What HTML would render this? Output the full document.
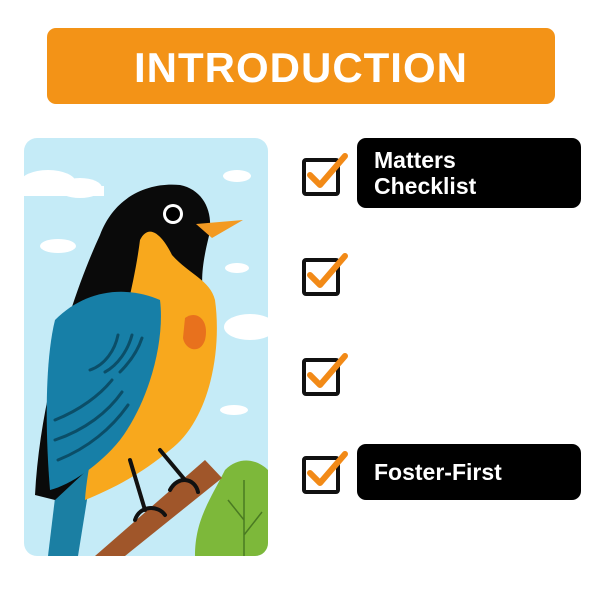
<!DOCTYPE html>
<html><head><meta charset="utf-8"><style>
body{margin:0;width:600px;height:600px;background:#fff;position:relative;overflow:hidden;font-family:"Liberation Sans",sans-serif}
.hdr{position:absolute;left:47px;top:28px;width:508px;height:76px;background:#F39317;border-radius:9px;color:#fff;font-weight:bold;font-size:42px;text-align:center;line-height:80px;letter-spacing:1px}
.cb{position:absolute;left:302px;width:30px;height:30px;border:4px solid #111;border-radius:4px;background:#fff}
.lab{position:absolute;left:357px;width:224px;background:#000;border-radius:9px;color:#fff;font-weight:bold;font-size:23px;line-height:26px;box-sizing:border-box;padding-left:17px}
svg.ck{position:absolute;left:300px;overflow:visible}
</style></head><body>
<div class="hdr">INTRODUCTION</div>
<svg style="position:absolute;left:24px;top:138px" width="244" height="418" viewBox="24 138 244 418">
<defs><clipPath id="c"><rect x="24" y="138" width="244" height="418" rx="13"/></clipPath></defs>
<g clip-path="url(#c)">
<rect x="24" y="138" width="244" height="418" fill="#C5EBF7"/>
<g fill="#fff">
<ellipse cx="48" cy="183" rx="28" ry="13"/><ellipse cx="80" cy="188" rx="22" ry="10"/><rect x="24" y="186" width="80" height="10"/>
<ellipse cx="237" cy="176" rx="14" ry="6"/><ellipse cx="58" cy="246" rx="18" ry="7"/><ellipse cx="237" cy="268" rx="12" ry="5"/>
<ellipse cx="250" cy="327" rx="26" ry="13"/><ellipse cx="234" cy="410" rx="14" ry="5"/>
</g>
<path d="M225 470 C240 455 258 460 268 470 L268 556 L195 556 C195 520 210 500 225 470Z" fill="#7DB83A"/>
<path d="M244 480 L244 556 M244 520 L228 500 M244 535 L262 512" stroke="#4a7a22" stroke-width="1.5" fill="none"/>
<path d="M95 556 L205 460 L222 478 L125 556Z" fill="#A0562A"/>
<path d="M62 440 L48 556 L78 556 L95 450Z" fill="#1B7FA3"/>
<path d="M35 495 C40 400 70 300 100 235 C115 195 150 182 180 185 C205 190 215 215 208 240 C202 265 200 285 205 300 L130 430 L55 500 Z" fill="#0A0A0A"/>
<path d="M140 240 C150 220 165 240 172 255 C190 275 210 280 215 300 C222 350 210 420 170 450 C140 475 110 490 85 500 C90 430 130 320 140 240Z" fill="#F8A81D"/>
<path d="M55 320 C85 290 125 285 160 300 C165 340 150 400 120 440 C100 465 70 485 50 490 C45 430 45 360 55 320Z" fill="#177FA7"/>
<g stroke="#0b4e68" stroke-width="3" fill="none" stroke-linecap="round">
<path d="M90 370 C105 365 115 350 118 335"/><path d="M105 372 C118 365 128 350 132 335"/><path d="M120 372 C130 362 138 350 142 338"/>
<path d="M55 420 C80 410 100 395 112 380"/><path d="M55 440 C85 430 108 412 122 392"/><path d="M58 460 C88 448 112 428 128 405"/>
</g>
<path d="M185 318 C195 310 210 318 205 340 C200 355 185 350 183 338Z" fill="#E8711D"/>
<path d="M196 224 L243 220 L212 238 Z" fill="#F39A22"/>
<circle cx="173" cy="214" r="10" fill="#fff"/><circle cx="173" cy="214" r="7" fill="#000"/>
<g stroke="#111" stroke-width="4" fill="none" stroke-linecap="round">
<path d="M130 460 L145 510"/><path d="M160 450 L185 480"/>
<path d="M135 520 C140 505 158 505 165 515"/><path d="M170 490 C178 475 195 478 198 492"/>
</g>
</g></svg>
<div class="cb" style="top:158px"></div>
<div class="cb" style="top:258px"></div>
<div class="cb" style="top:358px"></div>
<div class="cb" style="top:456px"></div>
<svg class="ck" style="top:150px" width="50" height="50"><path d="M10 25 L20 35 L45 6" stroke="#F28A17" stroke-width="6" fill="none" stroke-linecap="round" stroke-linejoin="round"/></svg>
<svg class="ck" style="top:250px" width="50" height="50"><path d="M10 25 L20 35 L45 6" stroke="#F28A17" stroke-width="6" fill="none" stroke-linecap="round" stroke-linejoin="round"/></svg>
<svg class="ck" style="top:350px" width="50" height="50"><path d="M10 25 L20 35 L45 6" stroke="#F28A17" stroke-width="6" fill="none" stroke-linecap="round" stroke-linejoin="round"/></svg>
<svg class="ck" style="top:448px" width="50" height="50"><path d="M10 25 L20 35 L45 6" stroke="#F28A17" stroke-width="6" fill="none" stroke-linecap="round" stroke-linejoin="round"/></svg>
<div class="lab" style="top:138px;height:70px;padding-top:9px">Matters<br>Checklist</div>
<div class="lab" style="top:444px;height:56px;line-height:56px">Foster-First</div>
</body></html>
